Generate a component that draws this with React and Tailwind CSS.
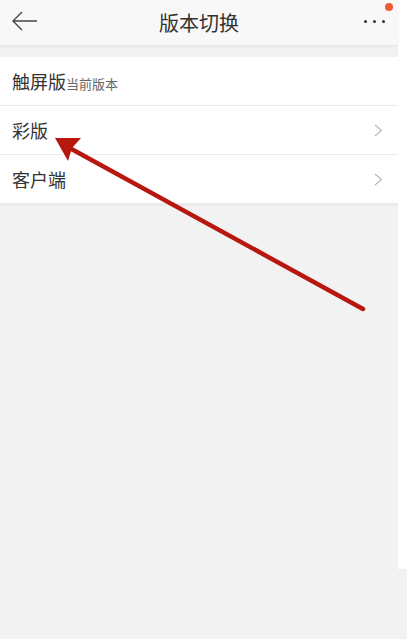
const font = { fontFamily: '"Noto Sans CJK SC", "Noto Sans", sans-serif' };

function Chevron() {
  return (
    <svg width="9" height="13" viewBox="0 0 9 13">
      <path d="M1 1l6.5 5.5L1 12" fill="none" stroke="#b5b5b5" strokeWidth="1.1" />
    </svg>
  );
}

function Row({ label, note, arrow }) {
  return (
    <div className="flex h-[49px] items-center justify-between border-b border-[#ececec] bg-white pl-[12px] pr-[15px]">
      <div className="flex items-baseline">
        <span className="text-[18px] text-[#333]">{label}</span>
        {note && <span className="text-[13px] text-[#666]">{note}</span>}
      </div>
      {arrow && <Chevron />}
    </div>
  );
}

export default function App() {
  return (
    <div className="relative h-[639px] w-[407px] overflow-hidden bg-[#f2f2f2]" style={font}>
      <div className="flex">
        <div className="w-[398px]">
          {/* header */}
          <div className="relative flex h-[45px] items-center justify-center bg-[#f8f8f8] shadow-[0_1px_3px_rgba(0,0,0,0.08)]">
            <svg className="absolute left-[11px] top-[11px]" width="28" height="20" viewBox="0 0 28 20">
              <path d="M26 10H2M11 1L2 10l9 9" fill="none" stroke="#444" strokeWidth="1.4" />
            </svg>
            <span className="text-[20px] text-[#333]">版本切换</span>
            <div className="absolute right-[13px] top-[20px] flex gap-[6px]">
              <span className="h-[3px] w-[3px] rounded-full bg-[#333]" />
              <span className="h-[3px] w-[3px] rounded-full bg-[#333]" />
              <span className="h-[3px] w-[3px] rounded-full bg-[#333]" />
            </div>
            <span className="absolute right-[5px] top-[3px] h-[8px] w-[8px] rounded-full bg-[#f05a34]" />
          </div>

          <div className="mt-[12px] shadow-[0_1px_2px_rgba(0,0,0,0.06)]">
            <Row label="触屏版" note="当前版本" />
            <Row label="彩版" arrow />
            <Row label="客户端" arrow />
          </div>
        </div>
        <div className="h-[569px] flex-1 bg-white" />
      </div>

      {/* annotation arrow */}
      <svg className="absolute left-0 top-0" width="407" height="639" viewBox="0 0 407 639">
        <line x1="363" y1="309" x2="66" y2="146" stroke="#b8170f" strokeWidth="4.5" strokeLinecap="round" />
        <polygon points="55,138 81,138 72,148 68,161" fill="#b8170f" />
      </svg>
    </div>
  );
}
